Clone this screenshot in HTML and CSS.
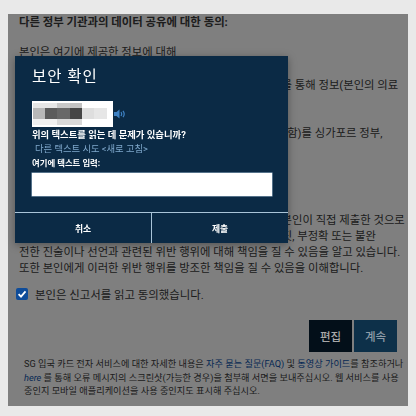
FILE: index.html
```html
<!DOCTYPE html>
<html lang="ko">
<head>
<meta charset="utf-8">
<title>보안 확인</title>
<link rel="stylesheet" href="styles.css">
</head>
<body>
<main class="panel">
  <h2 class="heading">다른 정부 기관과의 데이터 공유에 대한 동의:</h2>
  <p class="para first">본인은 여기에 제공한 정보에 대해</p>
  <p class="para second">본인은 싱가포르 정부 기관 공공 기관과 민간 기관 시스템를 통해 정보(본인의 의료</p>
  <p class="para third">기록 및 기타 개인 정보를 포함한 모든 관련 있는 정보를 포함)를 싱가포르 정부,</p>
  <p class="para fourth">본인은 이 신고서에 기재된 모든 내용이 사실이며 양식을 본인이 직접 제출한 것으로<br>간주되는 것에 동의합니다. 본인은 이 신고서에 기재된 거짓, 부정확 또는 불완<br>전한 진술이나 선언과 관련된 위반 행위에 대해 책임을 질 수 있음을 알고 있습니다.<br>또한 본인에게 이러한 위반 행위를 방조한 책임을 질 수 있음을 이해합니다.</p>
  <label class="agree"><span class="check"><svg viewBox="0 0 12 12" width="12" height="12"><path d="M2.6 6.2 5 8.7 9.5 3.4" fill="none" stroke="#fff" stroke-width="1.8"/></svg></span>본인은 신고서를 읽고 동의했습니다.</label>
  <div class="actions">
    <button class="btn edit">편집</button>
    <button class="btn next">계속</button>
  </div>
  <p class="foot">SG 입국 카드 전자 서비스에 대한 자세한 내용은 <a>자주 묻는 질문(FAQ)</a> 및 <a>동영상 가이드</a>를 참조하거나<br><a class="here">here</a> 를 통해 오류 메시지의 스크린샷(가능한 경우)을 첨부해 서면을 보내주십시오. 웹 서비스를 사용<br>중인지 모바일 애플리케이션을 사용 중인지도 표시해 주십시오.</p>
  <div class="backdrop"></div>
</main>
<section class="modal">
  <div class="modal-body">
    <h1 class="title">보안 확인</h1>
    <div class="captcha-row">
      <div class="captcha">
        <i class="g1"></i><i class="g1"></i><i class="g2"></i><i class="g3"></i><i class="g0"></i><i class="g0"></i>
        <i class="m1"></i><i class="m2"></i><i class="m3"></i><i class="m4"></i><i class="m5"></i><i class="m6"></i>
        <i class="g4"></i><i class="g4"></i><i class="g5"></i><i class="g5"></i><i class="g0"></i><i class="g0"></i>
      </div>
      <svg class="speaker" viewBox="0 0 12 10" width="12" height="10"><path d="M0 3h2.500L5.500 .5v9L2.500 7H0z" fill="#3f82c4"/><path d="M7 3c.8 1.200.8 2.800 0 4M9 1.800c1.500 2 1.500 4.400 0 6.400" fill="none" stroke="#3f82c4" stroke-width="1.200"/></svg>
    </div>
    <p class="ask">위의 텍스트를 읽는 데 문제가 있습니까?</p>
    <p class="retry">다른 텍스트 시도 &lt;새로 고침&gt;</p>
    <p class="enter">여기에 텍스트 입력:</p>
    <div class="field"></div>
  </div>
  <div class="modal-foot">
    <button class="mbtn">취소</button>
    <button class="mbtn">제출</button>
  </div>
</section>
</body>
</html>
```
FILE: styles.css
```css
* { box-sizing: border-box; }
html, body { margin: 0; padding: 0; }
body {
  width: 416px;
  height: 416px;
  overflow: hidden;
  position: relative;
  background: #e9e9e9;
  font-family: Roboto, "Noto Sans CJK KR", sans-serif;
  filter: blur(0.45px);
}
.panel {
  position: absolute;
  left: 8px;
  top: 14px;
  width: 400px;
  height: 392px;
  background: #fff;
  padding: 0 11px;
  color: #3a3a3a;
  overflow: hidden;
}
.backdrop {
  position: absolute;
  inset: 0;
  background: rgba(0,0,0,.5);
}
.heading {
  margin: 0;
  font-size: 11.4px;
  line-height: 16px;
  font-weight: 700;
  white-space: nowrap;
}
.para {
  margin: 0;
  font-size: 11.35px;
  line-height: 16px;
  white-space: nowrap;
}
.first { margin-top: 14px; }
.second { margin-top: 17px; }
.third { margin-top: 32px; }
.fourth { margin-top: 71px; }
.agree {
  display: flex;
  align-items: center;
  margin: 10px 0 0 -3px;
  height: 16px;
  font-size: 11.4px;
  white-space: nowrap;
}
.check {
  position: relative;
  z-index: 1;
  width: 12px;
  height: 12px;
  border-radius: 2px;
  background: #0f4c99;
  margin-right: 7px;
  display: flex;
}
.actions {
  position: relative;
  z-index: 1;
  display: flex;
  justify-content: flex-end;
  gap: 2px;
  margin: 18px 0 0 0;
}
.btn {
  width: 43px;
  height: 32px;
  border: 0;
  padding: 0;
  font: 500 11.5px Roboto, "Noto Sans CJK KR", sans-serif;
}
.edit { background: #030f19; color: #a8a8a8; }
.next { background: #0d3049; color: #8d9ca8; }
.foot {
  margin: 5px 0 0 5px;
  font-size: 9.2px;
  line-height: 13.5px;
  white-space: nowrap;
}
.foot a { color: #0a50a8; }
.here { font-style: italic; }
.modal {
  position: absolute;
  left: 15px;
  top: 56px;
  width: 273px;
  height: 187px;
  background: #0b2a45;
  box-shadow: 0 2px 8px rgba(0,0,0,.35);
  display: flex;
  flex-direction: column;
  color: #fff;
}
.modal-body {
  flex: 1;
  padding: 11px 17px 0;
}
.title {
  margin: 0;
  font-size: 15.5px;
  line-height: 20px;
  font-weight: 400;
  letter-spacing: 1px;
}
.captcha-row {
  display: flex;
  align-items: center;
  margin-top: 14px;
  gap: 1px;
}
.captcha {
  width: 81px;
  height: 26px;
  background: #fff;
  display: grid;
  grid-template-columns: 12px 12px 13px 12px 12px 13px;
  grid-template-rows: 5px 11px 6px;
  padding: 2px 0 0 1px;
  align-content: start;
}
.g0 { background: #fff; }
.g1 { background: #e6e6e6; }
.g2 { background: #c8c8c8; }
.g3 { background: #c2c2c2; }
.g4 { background: #f0f0f0; }
.g5 { background: #d8d8d8; }
.m1 { background: #b8b8b8; }
.m2 { background: #5c5c5c; }
.m3 { background: #686868; }
.m4 { background: #454545; }
.m5 { background: #dedede; }
.m6 { background: #e6e6e6; }
.ask, .retry, .enter { margin: 0; white-space: nowrap; }
.ask {
  margin-top: 1px;
  font-size: 9.35px;
  line-height: 14px;
  font-weight: 700;
}
.retry {
  margin-left: 3px;
  font-size: 9.3px;
  line-height: 14px;
  color: #7fa8cc;
}
.enter {
  font-size: 8.4px;
  line-height: 14px;
  font-weight: 700;
}
.field {
  height: 23px;
  margin-top: 3px;
  margin-right: -1px;
  background: #fff;
  box-shadow: 0 0 0 .5px #9fb9cf;
}
.modal-foot {
  height: 31px;
  display: grid;
  grid-template-columns: 136px 1fr;
  border-top: 1px solid #a9c4d8;
}
.mbtn {
  background: transparent;
  border: 0;
  padding: 0;
  color: #fff;
  font: 700 8.8px Roboto, "Noto Sans CJK KR", sans-serif;
}
.mbtn + .mbtn { border-left: 1px solid #a9c4d8; }
```
